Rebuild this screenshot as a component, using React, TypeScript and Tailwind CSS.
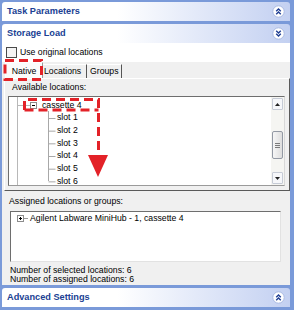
import React from "react";

function Chevron({ up }: { up: boolean }) {
  return (
    <svg width="13" height="13" viewBox="0 0 13 13">
      <circle cx="6.5" cy="6.5" r="5.7" fill="#ffffff" stroke="#a9bae3" strokeWidth="1" />
      {up ? (
        <path d="M4.2 6.2 L6.5 3.9 L8.8 6.2 M4.2 9.2 L6.5 6.9 L8.8 9.2" fill="none" stroke="#203f93" strokeWidth="1.4" />
      ) : (
        <path d="M4.2 3.8 L6.5 6.1 L8.8 3.8 M4.2 6.8 L6.5 9.1 L8.8 6.8" fill="none" stroke="#203f93" strokeWidth="1.4" />
      )}
    </svg>
  );
}

function Header({ title, up }: { title: string; up: boolean }) {
  return (
    <div className="h-[19px] shrink-0 rounded-t-[3px] bg-linear-to-r from-white from-40% to-[#c3d0f1] flex items-center justify-between pl-[5px] pr-[5px]">
      <span className="text-[9.2px] font-bold text-[#203f93] leading-none">{title}</span>
      <Chevron up={up} />
    </div>
  );
}

function ExpandBox({ plus }: { plus: boolean }) {
  return (
    <div className="relative w-[7px] h-[7px] border border-[#8c8c8c] bg-white shrink-0">
      <div className="absolute left-[1px] top-[2px] w-[3px] h-[1px] bg-black" />
      {plus && <div className="absolute left-[2px] top-[1px] w-[1px] h-[3px] bg-black" />}
    </div>
  );
}

const slots = ["slot 1", "slot 2", "slot 3", "slot 4", "slot 5", "slot 6"];

export default function App() {
  return (
    <div className="relative w-[294px] h-[310px] bg-[#7a9ad9] pl-[2px] pr-[4px] pt-[2px] flex flex-col font-['Liberation_Sans',Arial,sans-serif] text-[8.7px] text-black leading-none overflow-hidden">
      <Header title="Task Parameters" up={true} />
      <div className="h-[3px] shrink-0" />
      <Header title="Storage Load" up={false} />
      <div className="h-[242px] shrink-0 bg-[#f0f0f0] flex flex-col">
        {/* checkbox row */}
        <div className="h-[19px] shrink-0 bg-white flex items-center pl-[4px] gap-[3px]">
          <div className="w-[11px] h-[11px] border border-[#4a4a4a] bg-[#f4f4f4]" />
          <span>Use original locations</span>
        </div>
        {/* tabs */}
        <div className="h-[16px] shrink-0 flex items-end pl-[3px]">
          <div className="w-[38px] h-[16px] bg-[#fbfbfb] border-t border-l border-white border-r border-r-[#9a9a9a] flex items-center justify-center pt-[1px]">
            Native
          </div>
          <div className="w-[44px] h-[14px] border-t border-white border-r border-r-[#555555] flex items-center pl-[1px]">
            Locations
          </div>
          <div className="w-[35px] h-[14px] border-t border-white border-r border-r-[#555555] flex items-center pl-[3px]">
            Groups
          </div>
        </div>
        {/* tab page */}
        <div className="h-[113px] shrink-0 ml-[2px] border-t border-l border-white border-r border-b border-r-[#5a5a5a] border-b-[#5a5a5a] flex flex-col">
          <div className="h-[17px] shrink-0 flex items-center pl-[7px]">Available locations:</div>
          <div className="h-[90px] shrink-0 ml-[3px] mr-[4px] border border-t-[#6e6e6e] border-l-[#6e6e6e] border-r-[#d8d8d8] border-b-[#9a9a9a] bg-white flex">
            <div className="relative flex-1 pt-[1.7px]">
              <svg className="absolute left-0 top-0" width="262" height="88">
                <line x1="8.5" y1="0" x2="8.5" y2="88" stroke="#b8b8b8" />
                <line x1="8.5" y1="8.5" x2="21" y2="8.5" stroke="#b8b8b8" />
                <line x1="39.5" y1="14" x2="39.5" y2="84" stroke="#a8a8a8" />
                {slots.map((s, i) => (
                  <line key={s} x1="39.5" y1={21.5 + i * 12.67} x2="46.5" y2={21.5 + i * 12.67} stroke="#a8a8a8" />
                ))}
              </svg>
              <div className="relative h-[12.67px] flex items-center pl-[21px]">
                <ExpandBox plus={false} />
                <span className="ml-[5px]">cassette 4</span>
              </div>
              {slots.map((s) => (
                <div key={s} className="relative h-[12.67px] flex items-center pl-[48px]">
                  {s}
                </div>
              ))}
            </div>
            {/* scrollbar */}
            <div className="w-[13px] shrink-0 bg-[#f5f5f2] flex flex-col p-[1px]">
              <div className="h-[12px] shrink-0 border border-[#c6cbd6] bg-[#f6f7fa] rounded-[1px] flex items-center justify-center">
                <svg width="5" height="3" viewBox="0 0 5 3"><path d="M0 3 L2.5 0 L5 3 Z" fill="#222" /></svg>
              </div>
              <div className="h-[21px] shrink-0" />
              <div className="h-[28px] shrink-0 border border-[#9399a4] rounded-[2px] bg-linear-to-r from-[#f6f6f6] to-[#dedede] flex flex-col items-center justify-center gap-[1px]">
                <div className="w-[5px] h-[1px] bg-[#7b7b7b]" />
                <div className="w-[5px] h-[1px] bg-[#7b7b7b]" />
                <div className="w-[5px] h-[1px] bg-[#7b7b7b]" />
              </div>
              <div className="flex-1" />
              <div className="h-[12px] shrink-0 border border-[#c6cbd6] bg-[#f6f7fa] rounded-[1px] flex items-center justify-center">
                <svg width="5" height="3" viewBox="0 0 5 3"><path d="M0 0 L2.5 3 L5 0 Z" fill="#222" /></svg>
              </div>
            </div>
          </div>
        </div>
        <div className="h-[20px] shrink-0 flex items-center pl-[7px]">Assigned locations or groups:</div>
        <div className="h-[51px] shrink-0 ml-[8px] mr-[9px] border border-t-[#6e6e6e] border-l-[#6e6e6e] border-r-[#e2e2e2] border-b-[#e2e2e2] bg-white pt-[0.5px]">
          <div className="h-[12.67px] flex items-center pl-[6px]">
            <ExpandBox plus={true} />
            <div className="w-[4px] h-0 border-t border-[#9a9a9a]" />
            <span className="ml-[2px]">Agilent Labware MiniHub - 1, cassette 4</span>
          </div>
        </div>
        <div className="mt-[3.5px] pl-[8px] flex flex-col">
          <div className="h-[9px] flex items-center">Number of selected locations: 6</div>
          <div className="h-[9px] flex items-center">Number of assigned locations: 6</div>
        </div>
      </div>
      <div className="h-[3px] shrink-0" />
      <Header title="Advanced Settings" up={true} />

      {/* red annotation overlay */}
      <svg className="absolute left-0 top-0 pointer-events-none" width="294" height="310">
        <rect x="5" y="60.5" width="36.5" height="19" fill="none" stroke="#e32228" strokeWidth="3" strokeDasharray="9 5" />
        <path d="M24.5 110 L24.5 99.5 L98.5 99.5 L98.5 154" fill="none" stroke="#e32228" strokeWidth="3" strokeDasharray="9 5" />
        <path d="M24.5 110 L98.5 110" fill="none" stroke="#e32228" strokeWidth="3" strokeDasharray="9 5" />
        <path d="M88 155 L108 155 L98 177 Z" fill="#e32228" />
      </svg>
    </div>
  );
}
